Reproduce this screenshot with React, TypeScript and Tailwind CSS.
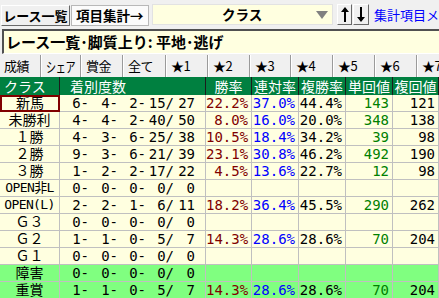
import React from "react";

type Row = {
  name: string;
  counts: string[];
  win: string;
  ren: string;
  fuku: string;
  tan: string;
  fukuKai: string;
  green?: boolean;
  selected?: boolean;
};

const empty = { win: "", ren: "", fuku: "", tan: "", fukuKai: "" };

const rows: Row[] = [
  { name: "新馬", counts: ["6-", "4-", "2-", "15/", "27"], win: "22.2%", ren: "37.0%", fuku: "44.4%", tan: "143", fukuKai: "121", selected: true },
  { name: "未勝利", counts: ["4-", "4-", "2-", "40/", "50"], win: "8.0%", ren: "16.0%", fuku: "20.0%", tan: "348", fukuKai: "138" },
  { name: "１勝", counts: ["4-", "3-", "6-", "25/", "38"], win: "10.5%", ren: "18.4%", fuku: "34.2%", tan: "39", fukuKai: "98" },
  { name: "２勝", counts: ["9-", "3-", "6-", "21/", "39"], win: "23.1%", ren: "30.8%", fuku: "46.2%", tan: "492", fukuKai: "190" },
  { name: "３勝", counts: ["1-", "2-", "2-", "17/", "22"], win: "4.5%", ren: "13.6%", fuku: "22.7%", tan: "12", fukuKai: "98" },
  { name: "OPEN非L", counts: ["0-", "0-", "0-", "0/", "0"], ...empty },
  { name: "OPEN(L)", counts: ["2-", "2-", "1-", "6/", "11"], win: "18.2%", ren: "36.4%", fuku: "45.5%", tan: "290", fukuKai: "262" },
  { name: "Ｇ３", counts: ["0-", "0-", "0-", "0/", "0"], ...empty },
  { name: "Ｇ２", counts: ["1-", "1-", "0-", "5/", "7"], win: "14.3%", ren: "28.6%", fuku: "28.6%", tan: "70", fukuKai: "204" },
  { name: "Ｇ１", counts: ["0-", "0-", "0-", "0/", "0"], ...empty },
  { name: "障害", counts: ["0-", "0-", "0-", "0/", "0"], ...empty, green: true },
  { name: "重賞", counts: ["1-", "1-", "0-", "5/", "7"], win: "14.3%", ren: "28.6%", fuku: "28.6%", tan: "70", fukuKai: "204", green: true },
];

const countWidths = ["w-[29px]", "w-[29px]", "w-[28px]", "w-[28px]", "w-[21px]"];

const tabs: [string, string][] = [
  ["成績", "w-[40px]"],
  ["シェア", "w-[40px]"],
  ["賞金", "w-[42px]"],
  ["全て", "w-[43px]"],
  ["★1", "w-[42px]"],
  ["★2", "w-[42px]"],
  ["★3", "w-[41px]"],
  ["★4", "w-[42px]"],
  ["★5", "w-[42px]"],
  ["★6", "w-[42px]"],
  ["★7", "w-[30px]"],
];

const headers = ["勝率", "連対率", "複勝率", "単回値", "複回値"];

function Arrow({ down }: { down?: boolean }) {
  return (
    <svg width="8" height="15" viewBox="0 0 8 15" className={down ? "rotate-180" : ""}>
      <path d="M4 0 L8 5 H5 V15 H3 V5 H0 Z" fill="#000" />
    </svg>
  );
}

const mono = "font-['DejaVu_Sans_Mono','Noto_Sans_CJK_JP',monospace]";

export default function App() {
  return (
    <div className="relative h-[298px] w-[439px] overflow-hidden bg-[#f0f0f0] font-['Noto_Sans_CJK_JP',sans-serif] text-black">
      {/* toolbar */}
      <div className="flex h-[29px] items-start pt-[4px]">
        <div className="ml-[1px] mt-[1px] flex h-[21px] w-[71px] items-center justify-center border border-b-[#696969] border-l-white border-r-[#696969] border-t-white bg-[#f0f0f0] text-[13px] font-bold">
          レース一覧
        </div>
        <div className="ml-[1px] mt-[1px] flex h-[21px] w-[80px] items-center justify-center border border-[#b8b8b8] bg-[#fbfbfb] text-[13.5px] font-bold">
          項目集計→
        </div>
        <div className="relative ml-[3px] flex h-[21px] w-[187px] items-center justify-center border border-[#e2e2e2] bg-[#ffffe0] text-[13.5px] font-bold">
          クラス
          <svg width="12" height="8" viewBox="0 0 12 8" className="absolute right-[4px] top-[6px]">
            <path d="M0 0 H12 L6 8 Z" fill="#808080" />
          </svg>
        </div>
        <div className="ml-[4px] flex h-[21px] w-[16px] items-center justify-center border border-b-[#696969] border-l-white border-r-[#696969] border-t-white bg-[#f0f0f0]">
          <Arrow />
        </div>
        <div className="ml-[1px] flex h-[21px] w-[16px] items-center justify-center border border-b-[#696969] border-l-white border-r-[#696969] border-t-white bg-[#f0f0f0]">
          <Arrow down />
        </div>
        <div className="ml-[5px] mt-[1px] whitespace-nowrap text-[13px] leading-[19px] text-[#0000ff]">集計項目メ</div>
      </div>

      {/* title */}
      <div className="ml-[2px] flex h-[25px] w-[440px] items-center border-b border-l-2 border-r border-t-2 border-b-white border-l-[#505050] border-r-white border-t-[#505050] bg-[#ffffe0] pl-[2px] text-[15px] font-bold">
        レース一覧･脚質上り: 平地･逃げ
      </div>

      {/* tabs */}
      <div className="mt-[1px] flex h-[22px] items-stretch">
        {tabs.map(([label, w], i) => (
          <div
            key={label}
            className={`${w} flex shrink-0 items-center whitespace-nowrap text-[13px] tracking-[-0.5px] ${
              i === 0
                ? "pl-[4px]"
                : "border-l border-[#9a9a9a] pl-[5px] shadow-[inset_1px_0_0_#ffffff]"
            }`}
          >
            {label === "シェア" ? (
              <span className="inline-block origin-left scale-x-[0.72] text-[14px]">{label}</span>
            ) : (
              label
            )}
          </div>
        ))}
      </div>

      {/* table */}
      <div className="grid grid-cols-[60px_146px_46px_47px_47px_47px_46px]">
        <div className="h-[18px] border-r border-[#1c1c1c] bg-[#008040] pl-[4px] text-[14px] leading-[18px] text-white">クラス</div>
        <div className="h-[18px] border-r border-[#1c1c1c] bg-[#008040] pl-[10px] text-[14px] leading-[18px] text-white">着別度数</div>
        {headers.map((h) => (
          <div key={h} className="h-[18px] border-r border-[#1c1c1c] bg-[#008040] text-center text-[14px] leading-[18px] text-white">
            {h}
          </div>
        ))}

        {rows.map((r) => {
          const bg = r.green ? "bg-[#80ff80]" : "bg-[#ffffe0]";
          const cell = `h-[17px] border-b border-r border-[#c0c0c0] ${bg} text-[14px] leading-[16px]`;
          const latin = /[A-Z]/.test(r.name);
          const nameText = latin ? "text-[13px] tracking-[-0.6px]" : "text-[14px]";
          return (
            <React.Fragment key={r.name}>
              <div
                className={
                  r.selected
                    ? `h-[17px] border-2 border-[#800000] ${bg} text-center leading-[13px] ${nameText} ${mono}`
                    : `h-[17px] whitespace-nowrap border-b border-r border-[#c0c0c0] ${bg} text-center leading-[16px] ${nameText} ${mono}`
                }
              >
                {r.name}
              </div>
              <div className={`${cell} flex ${mono}`}>
                {r.counts.map((c, j) => (
                  <span key={j} className={`${countWidths[j]} whitespace-pre text-right`}>
                    {c}
                  </span>
                ))}
              </div>
              <div className={`${cell} pr-[3px] text-right text-[#800000] ${mono}`}>{r.win}</div>
              <div className={`${cell} pr-[3px] text-right text-[#0000ff] ${mono}`}>{r.ren}</div>
              <div className={`${cell} pr-[3px] text-right ${mono}`}>{r.fuku}</div>
              <div className={`${cell} pr-[3px] text-right text-[#008000] ${mono}`}>{r.tan}</div>
              <div className={`${cell} pr-[3px] text-right ${mono}`}>{r.fukuKai}</div>
            </React.Fragment>
          );
        })}
      </div>
    </div>
  );
}
